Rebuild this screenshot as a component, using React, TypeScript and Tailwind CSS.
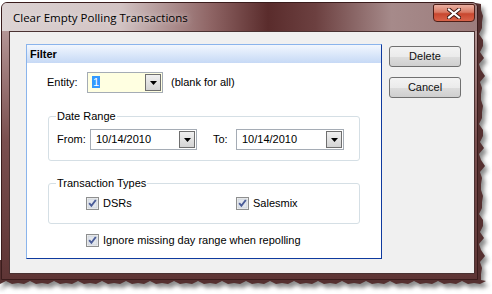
import React from "react";

// torn-paper edge behind the window (right + bottom)
function TornEdge() {
  const right: string[] = [];
  for (let i = 0; i <= 46; i++) {
    const y = 4 + i * 6;
    const x = 479 + ((i * 7) % 5) + (i % 3 === 0 ? 2 : 0);
    right.push(`${x},${y}`);
  }
  const bottom: string[] = [];
  for (let i = 0; i <= 82; i++) {
    const x = 486 - i * 6;
    const y = 281 + ((i * 5) % 4) + (i % 4 === 1 ? 2 : 0);
    bottom.push(`${x},${y}`);
  }
  const pts = ["470,2", ...right, ...bottom, "0,286", "0,260", "470,260"].join(" ");
  return (
    <svg className="absolute inset-0" width="492" height="294" viewBox="0 0 492 294">
      <defs>
        <filter id="blur" x="-5%" y="-5%" width="110%" height="110%">
          <feGaussianBlur stdDeviation="2" />
        </filter>
      </defs>
      <polygon points={pts} fill="#8a8a8a" transform="translate(3,4)" filter="url(#blur)" />
      <polygon points={pts} fill="#553030" />
    </svg>
  );
}

function Arrow() {
  return (
    <svg width="7" height="4" viewBox="0 0 7 4">
      <path d="M0 0h7L3.5 4z" fill="#000" />
    </svg>
  );
}

function Combo({ value, bg, w, pad, selected }: { value: string; bg: string; w: string; pad: string; selected?: boolean }) {
  return (
    <div className={`flex h-[21px] ${w} items-center border border-[#a5acb5] ${bg} ${pad} pr-[1px]`}>
      <span className="flex-1 leading-[13px]">
        {selected ? <span className="bg-[#3399ff] px-[1px] text-white">{value}</span> : value}
      </span>
      <span className="flex h-[17px] w-[16px] items-center justify-center border border-[#6f6f6f] bg-gradient-to-b from-[#f0f0f0] to-[#d4d4d4]">
        <Arrow />
      </span>
    </div>
  );
}

function Check({ label }: { label: string }) {
  return (
    <span className="flex items-center gap-[4px]">
      <svg width="13" height="13" viewBox="0 0 13 13">
        <rect x="0.5" y="0.5" width="12" height="12" fill="#f4f4f4" stroke="#8e8f8f" />
        <rect x="2" y="2" width="9" height="9" fill="#e2e6ec" stroke="#c4c9d2" strokeWidth="0.6" />
        <path d="M3.2 6.2 L5.4 8.8 L9.8 3" fill="none" stroke="#4a5c98" strokeWidth="1.9" />
      </svg>
      <span className="leading-[13px]">{label}</span>
    </span>
  );
}

function Group({ title, className, children }: { title: string; className: string; children: React.ReactNode }) {
  return (
    <div className={`relative ml-[21px] w-[312px] rounded-[3px] border border-[#d5dfe5] ${className}`}>
      <span className="absolute -top-[7px] left-[7px] bg-white px-[1px] leading-[13px]">{title}</span>
      {children}
    </div>
  );
}

function Button({ label }: { label: string }) {
  return (
    <button className="flex h-[21px] w-[72px] items-center justify-center rounded-[3px] border border-[#707070] bg-[linear-gradient(#f3f3f3_0%,#ebebeb_50%,#dddddd_51%,#cfcfcf_100%)] leading-[13px] text-[#101010]">
      {label}
    </button>
  );
}

export default function App() {
  return (
    <div className="relative h-[294px] w-[492px] overflow-hidden bg-white font-['Liberation_Sans',Arial,sans-serif] text-[11px] text-black">
      <TornEdge />
      <div className="relative ml-[1px] mt-[2px] flex h-[278px] w-[477px] flex-col rounded-t-[6px] border border-[#3a1c1c] bg-gradient-to-b from-[#c2a8a8] via-[#7a4f4f] to-[#5e3535]">
        <div className="flex h-[28px] items-start justify-between rounded-t-[5px] bg-[linear-gradient(90deg,#dcd3d3_0%,#d2c3c3_25%,#8e6464_44%,#5a2c2c_56%,#6c4040_66%,#a68a8a_82%,#9c7c7c_100%)]">
          <span className="mt-[7px] pl-[11px] font-['Open_Sans',sans-serif] text-[11.5px] leading-[15px] [text-shadow:0_0_6px_rgba(255,255,255,0.7)]">
            Clear Empty Polling Transactions
          </span>
          <span className="mr-[2px] mt-[1px] flex h-[18px] w-[42px] items-center justify-center rounded-b-[4px] rounded-t-[2px] border border-[#4f1f18] bg-[linear-gradient(#eab0a2_0%,#d97a64_45%,#c8472f_55%,#d9634a_100%)]">
            <svg width="14" height="11" viewBox="0 0 14 11">
              <path d="M2 1.5 L12 9.5 M12 1.5 L2 9.5" stroke="#3a1510" strokeWidth="4" strokeLinecap="square" />
              <path d="M2 1.5 L12 9.5 M12 1.5 L2 9.5" stroke="#ffffff" strokeWidth="2.2" strokeLinecap="square" />
            </svg>
          </span>
        </div>

        <div className="flex flex-1 pb-[5px] pl-[7px] pr-[2px]">
          <div className="flex w-[466px] border border-[#4a3232] bg-[#f0f0f0] pl-[16px] pt-[12px]">
            <div className="flex h-[215px] w-[356px] flex-col border border-b-[#0f3a9e] border-l-[#8ab4ec] border-r-[#0f3a9e] border-t-[#8ab4ec]">
              <div className="flex h-[18px] items-center bg-gradient-to-b from-[#f2f7fe] to-[#c6d9f5] pl-[3px] font-bold leading-[13px]">
                Filter
              </div>
              <div className="flex flex-1 flex-col bg-white">
                <div className="mt-[9px] flex items-center pl-[20px]">
                  <span className="w-[40px] leading-[13px]">Entity:</span>
                  <Combo value="1" bg="bg-[#ffffe1]" w="w-[76px]" pad="pl-[4px]" selected />
                  <span className="ml-[8px] leading-[13px]">(blank for all)</span>
                </div>

                <Group title="Date Range" className="mt-[23px] h-[45px]">
                  <div className="flex items-center pl-[8px] pt-[12px]">
                    <span className="w-[33px] leading-[13px]">From:</span>
                    <Combo value="10/14/2010" bg="bg-white" w="w-[107px]" pad="pl-[5px]" />
                    <span className="ml-[16px] w-[23px] leading-[13px]">To:</span>
                    <Combo value="10/14/2010" bg="bg-white" w="w-[108px]" pad="pl-[5px]" />
                  </div>
                </Group>

                <Group title="Transaction Types" className="mt-[22px] h-[41px]">
                  <div className="flex items-center pl-[37px] pt-[13px]">
                    <span className="w-[150px]">
                      <Check label="DSRs" />
                    </span>
                    <Check label="Salesmix" />
                  </div>
                </Group>

                <div className="ml-[59px] mt-[10px]">
                  <Check label="Ignore missing day range when repolling" />
                </div>
              </div>
            </div>

            <div className="ml-[7px] mt-[2px] flex flex-col gap-[10px]">
              <Button label="Delete" />
              <Button label="Cancel" />
            </div>
          </div>
        </div>
      </div>
    </div>
  );
}
